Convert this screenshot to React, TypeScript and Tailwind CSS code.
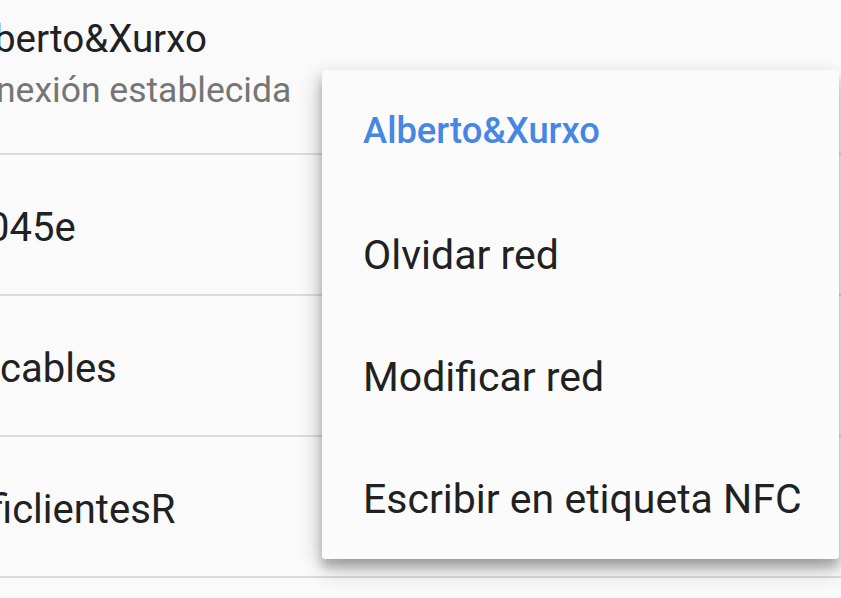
import React from "react";

function Divider() {
  return <div className="h-[2px] w-full bg-[#dcdcdc]" />;
}

function Row({ text, ml }: { text: string; ml: string }) {
  return (
    <div className="h-[139px] flex items-center pt-[7px]">
      <span className={`text-[40px] leading-none text-[#212121] whitespace-nowrap ${ml}`}>{text}</span>
    </div>
  );
}

export default function App() {
  return (
    <div className="relative w-[841px] h-[598px] overflow-hidden bg-[#fafafa] font-['Roboto',sans-serif]">
      <div className="h-[153px] pt-[20px]">
        <div className="text-[38.5px] leading-none text-[#212121] whitespace-nowrap -ml-[6px]">berto&amp;Xurxo</div>
        <div className="mt-[14px] text-[35.5px] leading-none text-[#757575] whitespace-nowrap -ml-[4px]">nexión establecida</div>
      </div>
      <Divider />
      <Row text="045e" ml="-ml-[13px]" />
      <Divider />
      <Row text="cables" ml="ml-0" />
      <Divider />
      <Row text="ficlientesR" ml="-ml-[10px]" />
      <Divider />

      <div className="absolute left-[322px] top-[70px] w-[517px] rounded-[3px] bg-[#fbfbfb] shadow-[0_12px_22px_rgba(0,0,0,0.2),0_8px_10px_rgba(0,0,0,0.2),-8px_0_18px_rgba(0,0,0,0.06)]">
        <div className="h-[123px] flex items-center pl-[41px]">
          <span className="text-[36.4px] leading-none font-medium text-[#4686e4] whitespace-nowrap">Alberto&amp;Xurxo</span>
        </div>
        {["Olvidar red", "Modificar red", "Escribir en etiqueta NFC"].map((t) => (
          <div key={t} className="h-[122px] flex items-center pl-[41px] pt-[3px]">
            <span className="text-[41px] leading-none text-[#212121] whitespace-nowrap">{t}</span>
          </div>
        ))}
      </div>
    </div>
  );
}
